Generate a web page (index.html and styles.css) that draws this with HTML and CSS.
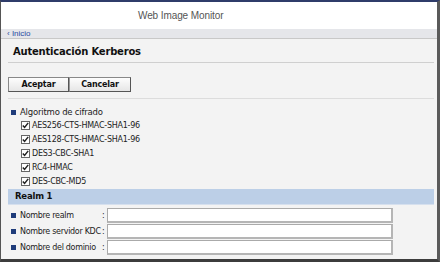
FILE: index.html
```html
<!DOCTYPE html>
<html lang="es">
<head>
<meta charset="utf-8">
<title>Web Image Monitor</title>
<link rel="stylesheet" href="styles.css">
</head>
<body>
<div class="frame">
  <header class="header">
    <span class="brand">Web Image Monitor</span>
  </header>
  <nav class="crumbs"><a class="crumb-link" href="#"><span class="crumb-arrow">‹</span> Inicio</a></nav>
  <main class="content">
    <h1 class="title">Autenticación Kerberos</h1>
    <div class="actions">
      <button class="btn" type="button">Aceptar</button><button class="btn" type="button">Cancelar</button>
    </div>
    <section class="algo">
      <div class="item-label"><span class="bullet"></span>Algoritmo de cifrado</div>
      <ul class="checks">
        <li class="check"><span class="box"><svg viewBox="0 0 9 9" width="9" height="9"><path d="M1.8 4.4 L3.6 6.4 L7.2 1.9" fill="none" stroke="#222" stroke-width="1.5"/></svg></span>AES256-CTS-HMAC-SHA1-96</li>
        <li class="check"><span class="box"><svg viewBox="0 0 9 9" width="9" height="9"><path d="M1.8 4.4 L3.6 6.4 L7.2 1.9" fill="none" stroke="#222" stroke-width="1.5"/></svg></span>AES128-CTS-HMAC-SHA1-96</li>
        <li class="check"><span class="box"><svg viewBox="0 0 9 9" width="9" height="9"><path d="M1.8 4.4 L3.6 6.4 L7.2 1.9" fill="none" stroke="#222" stroke-width="1.5"/></svg></span>DES3-CBC-SHA1</li>
        <li class="check"><span class="box"><svg viewBox="0 0 9 9" width="9" height="9"><path d="M1.8 4.4 L3.6 6.4 L7.2 1.9" fill="none" stroke="#222" stroke-width="1.5"/></svg></span>RC4-HMAC</li>
        <li class="check"><span class="box"><svg viewBox="0 0 9 9" width="9" height="9"><path d="M1.8 4.4 L3.6 6.4 L7.2 1.9" fill="none" stroke="#222" stroke-width="1.5"/></svg></span>DES-CBC-MD5</li>
      </ul>
    </section>
    <div class="section-bar">Realm 1</div>
    <div class="fields">
      <div class="field"><span class="bullet"></span><span class="field-name">Nombre realm</span><span class="colon">:</span><span class="input"></span></div>
      <div class="field"><span class="bullet"></span><span class="field-name">Nombre servidor KDC</span><span class="colon">:</span><span class="input"></span></div>
      <div class="field"><span class="bullet"></span><span class="field-name">Nombre del dominio</span><span class="colon">:</span><span class="input"></span></div>
    </div>
  </main>
</div>
</body>
</html>
```

FILE: styles.css
```css
html, body {
  margin: 0;
  padding: 0;
}
body {
  width: 440px;
  height: 262px;
  overflow: hidden;
  font-family: "DejaVu Sans", Verdana, sans-serif;
  color: #222;
}
.frame {
  box-sizing: border-box;
  width: 440px;
  height: 262px;
  border-top: 2px solid #2f3c6a;
  border-left: 1px solid #555;
  border-right: 3px solid #5a5a5a;
  border-bottom: 3px solid #3c3c3c;
  display: flex;
  flex-direction: column;
  background: #f3f3f3;
}
.header {
  height: 27px;
  background: #fff;
  display: flex;
  align-items: center;
  padding-left: 137px;
}
.brand {
  font-family: "Liberation Sans", Arial, sans-serif;
  font-size: 10px;
  letter-spacing: -0.1px;
  color: #555;
}
.crumbs {
  height: 9px;
  background: #e5e6ea;
  border-bottom: 1px solid #c8c8c8;
  display: flex;
  align-items: center;
  padding-left: 6px;
}
.crumb-link {
  font-family: "Liberation Sans", Arial, sans-serif;
  font-size: 8px;
  color: #2a4aa0;
  text-decoration: none;
  line-height: 9px;
}
.crumb-arrow {
  font-size: 8px;
}
.content {
  flex: 1;
  padding: 0 3px 0 7px;
  background: #f3f3f3;
}
.title {
  margin: 0;
  height: 23px;
  border-bottom: 1px solid #cfcfcf;
  font-size: 10px;
  letter-spacing: -0.2px;
  font-weight: bold;
  line-height: 26px;
  padding-left: 5px;
  color: #111;
  white-space: nowrap;
}
.actions {
  margin-top: 14px;
  padding-bottom: 6px;
  border-bottom: 1px solid #dcdcdc;
  display: flex;
}
.btn {
  height: 15px;
  box-sizing: border-box;
  padding: 0;
  margin: 0;
  font-family: "DejaVu Sans", Verdana, sans-serif;
  font-size: 8px;
  letter-spacing: -0.2px;
  font-weight: bold;
  color: #111;
  background: linear-gradient(#fdfdfd, #e6e6e6);
  border: 1px solid #888;
  border-right-color: #555;
  border-bottom-color: #555;
  line-height: 13px;
}
.btn:first-child {
  width: 61px;
}
.btn:last-child {
  width: 62px;
  border-left: 1px solid #999;
}
.algo {
  padding-top: 7px;
  font-size: 8.5px;
  letter-spacing: -0.2px;
}
.item-label {
  display: flex;
  align-items: center;
  height: 12px;
  padding-left: 3px;
  white-space: nowrap;
}
.bullet {
  display: inline-block;
  width: 5px;
  height: 5px;
  background: #1f3c7a;
  margin-right: 4px;
  flex: none;
}
.checks {
  list-style: none;
  margin: 0;
  padding: 0 0 0 13px;
}
.check {
  display: flex;
  align-items: center;
  height: 14px;
  font-size: 8px;
  letter-spacing: -0.25px;
  white-space: nowrap;
}
.box {
  box-sizing: border-box;
  width: 9px;
  height: 9px;
  border: 1px solid #666;
  background: #fff;
  margin-right: 2px;
  display: flex;
  align-items: center;
  justify-content: center;
  flex: none;
}
.box svg {
  flex: none;
}
.section-bar {
  margin-top: 1px;
  height: 15px;
  background: #bccfe7;
  border-bottom: 1px solid #d6e0ee;
  font-size: 8.5px;
  letter-spacing: -0.2px;
  font-weight: bold;
  line-height: 15px;
  padding-left: 7px;
  color: #111;
}
.fields {
  padding-top: 2px;
  font-size: 8px;
  letter-spacing: -0.3px;
}
.field {
  display: flex;
  align-items: center;
  height: 16px;
  padding-left: 3px;
}
.field-name {
  width: 82px;
  flex: none;
  white-space: nowrap;
}
.colon {
  width: 5px;
  flex: none;
}
.input {
  box-sizing: border-box;
  width: 286px;
  height: 15px;
  margin-top: 1px;
  background: #fff;
  border: 1px solid #aaa;
  border-right: 2px solid #b5b5b5;
  border-bottom: 2px solid #b5b5b5;
  flex: none;
}
```
